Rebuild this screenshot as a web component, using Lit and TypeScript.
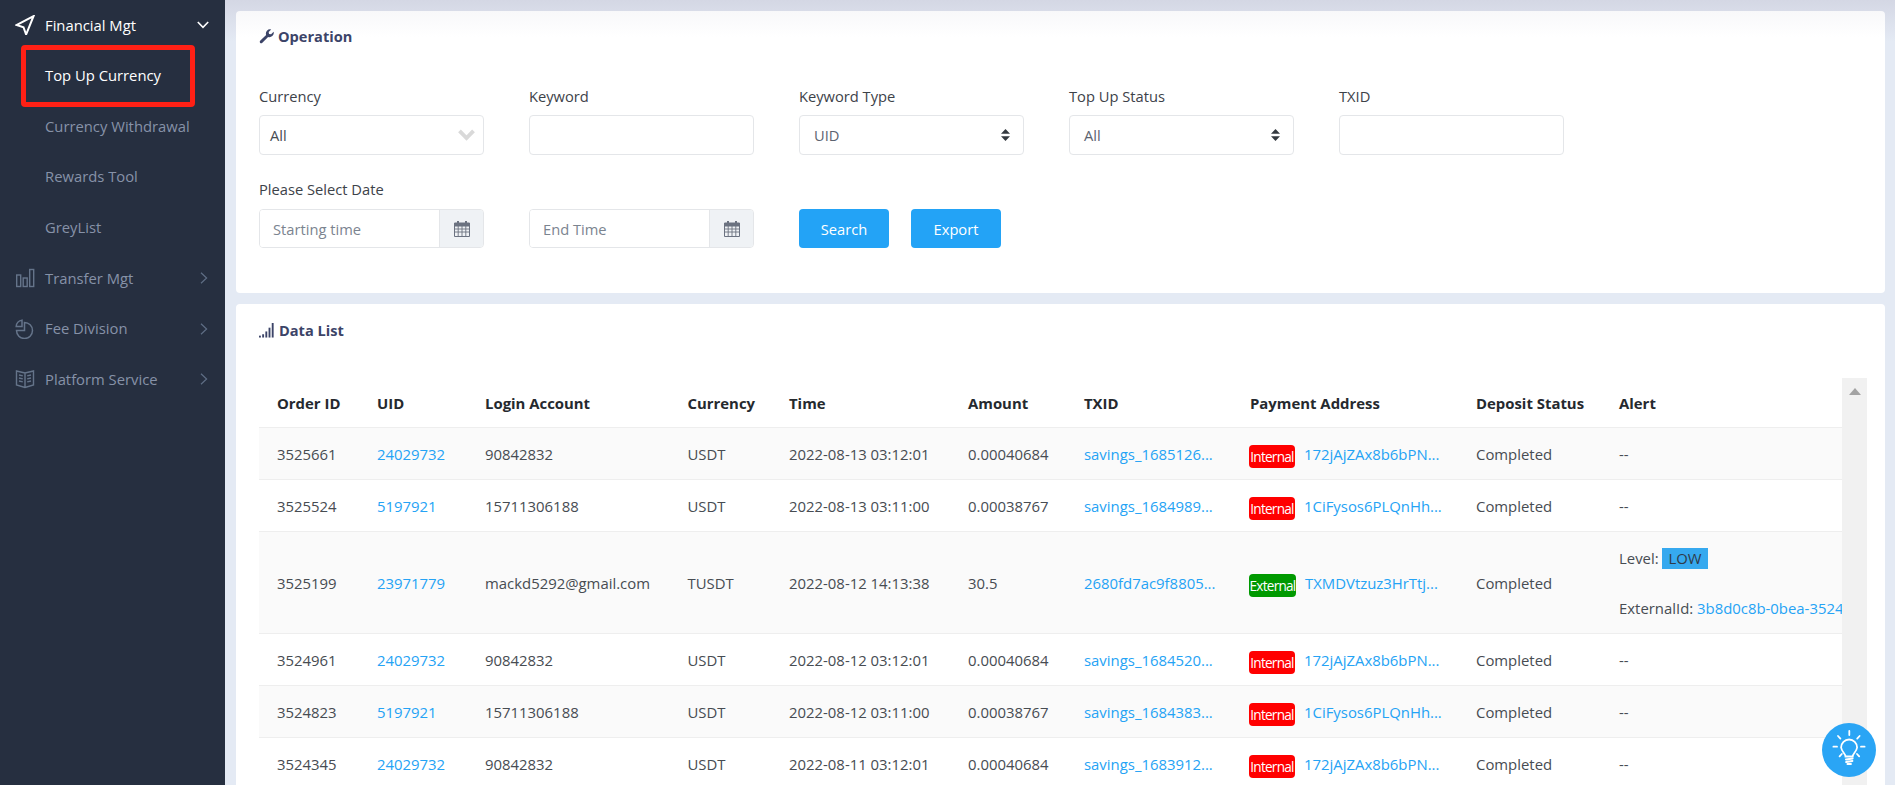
import { LitElement, html, css, svg } from "lit";
import { customElement } from "lit/decorators.js";

const COLS = [100, 108, 202.5, 101.5, 179, 116, 166, 226, 143, 320];
const HEADS = ["Order ID", "UID", "Login Account", "Currency", "Time", "Amount", "TXID", "Payment Address", "Deposit Status", "Alert"];

const ROWS = [
  { id: "3525661", uid: "24029732", login: "90842832", cur: "USDT", time: "2022-08-13 03:12:01", amount: "0.00040684", txid: "savings_1685126...", kind: "Internal", addr: "172jAjZAx8b6bPN..." },
  { id: "3525524", uid: "5197921", login: "15711306188", cur: "USDT", time: "2022-08-13 03:11:00", amount: "0.00038767", txid: "savings_1684989...", kind: "Internal", addr: "1CiFysos6PLQnHh..." },
  { id: "3525199", uid: "23971779", login: "mackd5292@gmail.com", cur: "TUSDT", time: "2022-08-12 14:13:38", amount: "30.5", txid: "2680fd7ac9f8805...", kind: "External", addr: "TXMDVtzuz3HrTtj...", alert: true },
  { id: "3524961", uid: "24029732", login: "90842832", cur: "USDT", time: "2022-08-12 03:12:01", amount: "0.00040684", txid: "savings_1684520...", kind: "Internal", addr: "172jAjZAx8b6bPN..." },
  { id: "3524823", uid: "5197921", login: "15711306188", cur: "USDT", time: "2022-08-12 03:11:00", amount: "0.00038767", txid: "savings_1684383...", kind: "Internal", addr: "1CiFysos6PLQnHh..." },
  { id: "3524345", uid: "24029732", login: "90842832", cur: "USDT", time: "2022-08-11 03:12:01", amount: "0.00040684", txid: "savings_1683912...", kind: "Internal", addr: "172jAjZAx8b6bPN..." },
];

const sendIcon = html`<svg class="ico" viewBox="0 0 20 20" fill="none" stroke="#fff" stroke-width="2" stroke-linejoin="miter"><path d="M18.5 1.2 1.5 10l7 2.2 2.6 7.3z"/></svg>`;
const barsIcon = html`<svg class="ico" viewBox="0 0 20 20" fill="none" stroke="currentColor" stroke-width="1.4"><rect x="1.7" y="7" width="4" height="11.5"/><rect x="8.2" y="10" width="4" height="8.5"/><rect x="14.7" y="1.5" width="4" height="17"/></svg>`;
const pieIcon = html`<svg class="ico" viewBox="0 0 20 20" fill="none" stroke="currentColor" stroke-width="1.5"><path d="M9.5 3.5a8 8 0 1 1-8 8h8z"/><path d="M7 1.2a6.5 6.5 0 0 0-5.8 6.3H7z"/></svg>`;
const bookIcon = html`<svg class="ico" viewBox="0 0 20 20" fill="none" stroke="currentColor" stroke-width="1.4"><path d="M1.5 2 10 4l8.5-2v14L10 18.5 1.5 16zM10 4v14.5"/><path d="M4 6l3.8.9M4 9l3.8.9M4 12l3.8.9M16 6l-3.8.9M16 9l-3.8.9M16 12l-3.8.9"/></svg>`;
const chevDown = html`<svg class="chev" viewBox="0 0 12 8" fill="none" stroke="#fff" stroke-width="1.6"><path d="M.8 1 6 6.4 11.2 1"/></svg>`;
const chevRight = html`<svg class="chev right" viewBox="0 0 8 12" fill="none" stroke="currentColor" stroke-width="1.2"><path d="M1 .8 6.6 6 1 11.2"/></svg>`;
const wrench = html`<svg class="hico" viewBox="0 0 16 16"><path d="M1.2 12.6 7.6 6.3a4.6 4.6 0 0 1 .9-4.5A4.4 4.4 0 0 1 13 .4l-2.7 2.7.4 2.2 2.2.4 2.7-2.7a4.4 4.4 0 0 1-1.4 4.5 4.6 4.6 0 0 1-4.5.9l-6.4 6.4c-.5.6-1.4.6-2 0s-.7-1.5-.1-2z" fill="#3c4468"/></svg>`;
const signal = html`<svg class="hico" viewBox="0 0 16 16" fill="#3c4468"><rect x="0" y="13.5" width="2" height="2"/><rect x="3.4" y="12" width="2" height="3.5"/><rect x="6.8" y="9" width="2" height="6.5"/><rect x="10.2" y="5" width="2" height="10.5"/><rect x="13.6" y="0" width="2" height="15.5"/></svg>`;
const calendar = html`<svg class="cal" viewBox="0 0 16 17" fill="none" stroke="#6b7280"><path d="M.5 4h15v12.5H.5z" stroke-width="1"/><path d="M.5 3h15v3H.5z" fill="#6b7280" stroke-width="1"/><path d="M4 1v4M12 1v4" stroke-width="2"/><path d="M.5 9h15M.5 12h15M4.2 6v10M8 6v10M11.8 6v10" stroke-width=".9"/></svg>`;
const sortIcon = html`<svg class="sort" viewBox="0 0 9 12" fill="#343a40"><path d="M4.5 0 9 4.8H0zM4.5 12 0 7.2h9z"/></svg>`;
const thickChev = html`<svg class="thick" viewBox="0 0 16 11" fill="none" stroke="#d9d9d9" stroke-width="3.6"><path d="M1.4 1.6 8 8.4l6.6-6.8"/></svg>`;
const rays = [
  [27.3, 8, 27.3, 12], [16, 13, 18.4, 15.6], [37.6, 13, 35.2, 15.6], [11.4, 23.7, 15, 23.7],
  [39, 23.7, 42.6, 23.7], [17.6, 33.4, 19.8, 31], [37.2, 33.4, 35, 31],
];
const bulb = html`<svg viewBox="0 0 54 54" width="54" height="54" fill="none" stroke="#fff" stroke-width="1.8" stroke-linecap="round">
  ${rays.map(r => svg`<line x1=${r[0]} y1=${r[1]} x2=${r[2]} y2=${r[3]} />`)}
  <path d="M23.5 33.5c0-3-3.8-4.6-4.4-9a8 8 0 1 1 16 0c-.6 4.4-4.4 6-4.4 9z"/>
  <path d="M24 36.4l6.6-1M24.2 39l6.2-1" stroke-width="2"/><path d="M25.4 41h3.6" stroke-width="1.8"/>
</svg>`;

@customElement("app-root")
export class AppRoot extends LitElement {
  static styles = css`
    :host {
      display: flex;
      position: relative;
      height: 100vh;
      overflow: hidden;
      font-family: "Open Sans", "Noto Sans", sans-serif;
      font-size: 14.7px;
      color: #474c52;
    }
    * { box-sizing: border-box; }

    .sidebar {
      position: relative;
      flex: 0 0 225px;
      background: #262f40;
      color: #8692a8;
      font-size: 14.8px;
    }
    .nav-item {
      display: flex;
      align-items: center;
      height: 50.6px;
      padding: 0 0 1.5px 45px;
      position: relative;
      white-space: nowrap;
    }
    .nav-item.on { color: #fff; }
    .ico { position: absolute; left: 15px; top: 15px; width: 20px; height: 20px; color: #65748a; }
    .chev { position: absolute; left: 197px; top: 21px; width: 12px; height: 8px; }
    .chev.right { left: 200px; top: 19px; width: 8px; height: 12px; color: #5f6e85; }
    .marker {
      position: absolute;
      left: 21px;
      top: 45px;
      width: 174px;
      height: 62px;
      border: 5px solid #ff2015;
      border-radius: 4px;
      pointer-events: none;
    }

    .main {
      flex: 1;
      min-width: 0;
      padding: 11px 10px 0 11px;
      background: linear-gradient(#d4d7e4, #e4eaf4 42px);
    }
    .card {
      background: #fff;
      border-radius: 4px;
      padding: 14px 18px 0 23px;
    }
    .card.op {
      height: 282px;
      background: linear-gradient(#f8f8fa, #fff 26px);
    }
    .card.list { margin-top: 11px; padding-top: 15px; }
    .card-title {
      display: flex;
      align-items: center;
      gap: 4px;
      height: 22px;
      font-size: 14.6px;
      font-weight: 700;
      color: #3c4468;
    }
    .card.list .card-title { gap: 5px; }
    .hico { width: 15px; height: 15px; }

    .form {
      display: grid;
      grid-template-columns: repeat(5, 225px);
      column-gap: 45px;
      margin-top: 38px;
    }
    .field label {
      display: block;
      line-height: 22px;
      margin-bottom: 8px;
      color: #3d4249;
    }
    .row2 { margin-top: 23px; align-self: end; }
    .row2 label { margin-bottom: 9px; }
    .control {
      display: flex;
      align-items: center;
      justify-content: space-between;
      width: 100%;
      height: 40px;
      padding: 0 14px;
      border: 1px solid #e4e6e9;
      border-radius: 4px;
      background: #fff;
      font: inherit;
      color: #5c6370;
      outline: none;
    }
    .control.cur { padding: 0 8px 0 10px; color: #474c52; }
    .thick { width: 17px; height: 12px; }
    .sort { width: 9px; height: 12px; margin-right: -1px; }
    .date {
      display: flex;
      height: 39px;
      border: 1px solid #e4e6e9;
      border-radius: 4px;
      overflow: hidden;
    }
    .date input {
      flex: 1;
      min-width: 0;
      border: 0;
      padding: 1px 14px 0 13px;
      font: inherit;
      outline: none;
    }
    .date input::placeholder { color: #7b8490; opacity: 1; }
    .addon {
      flex: 0 0 44px;
      display: flex;
      align-items: center;
      justify-content: center;
      background: #eff2f5;
      border-left: 1px solid #e4e6e9;
    }
    .cal { width: 16px; height: 17px; }
    .actions { display: flex; gap: 22px; grid-column: 3 / span 2; align-self: end; }
    .btn {
      width: 90px;
      height: 39px;
      border: 0;
      border-radius: 4px;
      background: #23a3f6;
      color: #fff;
      font: inherit;
    }

    .table-box {
      display: flex;
      margin-top: 37px;
      font-size: 14.9px;
    }
    .table-clip { flex: 1; min-width: 0; overflow: hidden; }
    table {
      table-layout: fixed;
      width: 1462px;
      border-collapse: separate;
      border-spacing: 0;
    }
    th, td {
      padding: 0 0 0 18px;
      text-align: left;
      white-space: nowrap;
      border-bottom: 1px solid #eeeeee;
    }
    th {
      height: 50px;
      padding-top: 1px;
      font-weight: 700;
      color: #25292e;
    }
    td { height: 52px; padding-top: 1px; }
    tbody tr:nth-child(odd) td { background: #fafafa; }
    a { color: #25a3f5; text-decoration: none; }
    .addr { display: flex; align-items: center; gap: 9px; margin-left: -1px; }
    .kind {
      width: 46px;
      height: 23px;
      margin-top: 4px;
      border-radius: 4px;
      background: #f00;
      color: #fff;
      font-size: 13.6px;
      line-height: 24px;
      letter-spacing: -0.75px;
      text-align: center;
      overflow: hidden;
      white-space: nowrap;
    }
    .kind.External { width: 47px; background: #090; }
    .alert-line { line-height: 22px; }
    .alert-line + .alert-line { margin-top: 28px; }
    .low {
      display: inline-block;
      padding: 0 6px;
      height: 21px;
      line-height: 21px;
      background: #36a9ef;
      color: #2f3b4a;
    }
    .vbar {
      flex: 0 0 25px;
      background: #f1f1f1;
      display: flex;
      justify-content: center;
      padding-top: 10px;
    }
    .vbar i {
      width: 0;
      height: 0;
      border-left: 6px solid transparent;
      border-right: 6px solid transparent;
      border-bottom: 7px solid #a3a3a3;
    }
    .fab {
      position: absolute;
      left: 1822px;
      top: 723px;
      width: 54px;
      height: 54px;
      border-radius: 50%;
      background: #2aa5f5;
    }
    .fab svg { display: block; }
  `;

  private navItem(label: string, icon: unknown, on = false) {
    return html`<div class="nav-item ${on ? "on" : ""}">
      ${icon}${label}${on ? chevDown : icon ? chevRight : ""}
    </div>`;
  }

  private sub(label: string, on = false) {
    return html`<div class="nav-item ${on ? "on" : ""}">${label}</div>`;
  }

  private renderAlert(r: (typeof ROWS)[number]) {
    if (!r.alert) return "--";
    return html`<div class="alert-line">Level: <span class="low">LOW</span></div>
      <div class="alert-line">ExternalId: <a>3b8d0c8b-0bea-3524-9f1c-7e21a6d4c0b5</a></div>`;
  }

  render() {
    return html`
      <aside class="sidebar">
        ${this.navItem("Financial Mgt", sendIcon, true)}
        ${this.sub("Top Up Currency", true)}
        ${this.sub("Currency Withdrawal")}
        ${this.sub("Rewards Tool")}
        ${this.sub("GreyList")}
        ${this.navItem("Transfer Mgt", barsIcon)}
        ${this.navItem("Fee Division", pieIcon)}
        ${this.navItem("Platform Service", bookIcon)}
        <div class="marker"></div>
      </aside>
      <main class="main">
        <section class="card op">
          <div class="card-title">${wrench}Operation</div>
          <div class="form">
            <div class="field"><label>Currency</label><div class="control cur">All ${thickChev}</div></div>
            <div class="field"><label>Keyword</label><input class="control" /></div>
            <div class="field"><label>Keyword Type</label><div class="control">UID ${sortIcon}</div></div>
            <div class="field"><label>Top Up Status</label><div class="control">All ${sortIcon}</div></div>
            <div class="field"><label>TXID</label><input class="control" /></div>
            <div class="field row2">
              <label>Please Select Date</label>
              <div class="date"><input placeholder="Starting time" /><span class="addon">${calendar}</span></div>
            </div>
            <div class="field row2">
              <div class="date"><input placeholder="End Time" /><span class="addon">${calendar}</span></div>
            </div>
            <div class="actions">
              <button class="btn">Search</button>
              <button class="btn">Export</button>
            </div>
          </div>
        </section>
        <section class="card list">
          <div class="card-title">${signal}Data List</div>
          <div class="table-box">
            <div class="table-clip">
              <table>
                <colgroup>${COLS.map(w => html`<col style="width:${w}px" />`)}</colgroup>
                <thead><tr>${HEADS.map(h => html`<th>${h}</th>`)}</tr></thead>
                <tbody>
                  ${ROWS.map(r => html`<tr style=${r.alert ? "height:102px" : ""}>
                    <td>${r.id}</td>
                    <td><a>${r.uid}</a></td>
                    <td>${r.login}</td>
                    <td>${r.cur}</td>
                    <td>${r.time}</td>
                    <td>${r.amount}</td>
                    <td><a>${r.txid}</a></td>
                    <td><div class="addr"><span class="kind ${r.kind}">${r.kind}</span><a>${r.addr}</a></div></td>
                    <td>Completed</td>
                    <td>${this.renderAlert(r)}</td>
                  </tr>`)}
                </tbody>
              </table>
            </div>
            <div class="vbar"><i></i></div>
          </div>
        </section>
      </main>
      <div class="fab">${bulb}</div>
    `;
  }
}
